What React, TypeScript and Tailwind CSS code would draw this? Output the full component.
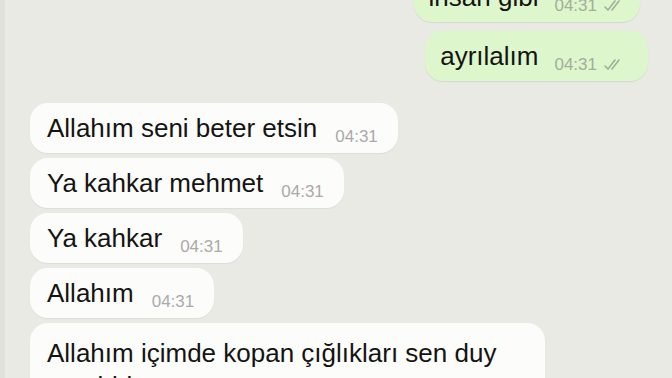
import React from "react";

type Msg = { text: string; time: string; out?: boolean };

const incoming: Msg[] = [
  { text: "Allahım seni beter etsin", time: "04:31" },
  { text: "Ya kahkar mehmet", time: "04:31" },
  { text: "Ya kahkar", time: "04:31" },
  { text: "Allahım", time: "04:31" },
];

const Ticks = () => (
  <svg width="22" height="12" viewBox="0 0 22 12" className="ml-[6px]">
    <path d="M2 8 L5 11 L12 2" fill="none" stroke="#9fb09a" strokeWidth="1.6" strokeLinecap="round" />
    <path d="M9 11 L16 2" fill="none" stroke="#9fb09a" strokeWidth="1.6" strokeLinecap="round" />
  </svg>
);

const OutBubble = ({ text, last }: { text: string; last?: boolean }) => (
  <div
    className={`flex h-[50px] items-center rounded-[18px] bg-[#def6cb] pl-[15px] shadow-[0_1px_1px_rgba(0,0,0,0.08)] ${
      last ? "pr-[23px]" : "pr-[15px]"
    }`}
  >
    <span className="text-[26px] leading-none text-[#141414]">{text}</span>
    <span className="ml-[16px] mt-[16px] flex items-center text-[17px] leading-none text-[#a3ae9d]">
      04:31
      <Ticks />
    </span>
  </div>
);

const InBubble = ({ text, time }: Msg) => (
  <div className="flex h-[50px] items-center self-start rounded-[18px] bg-[#fcfcfa] pl-[17px] pr-[20px] shadow-[0_1px_1px_rgba(0,0,0,0.06)]">
    <span className="text-[26px] leading-none text-[#141414]">{text}</span>
    <span className="ml-[18px] mt-[16px] text-[17px] leading-none text-[#aaaaaa]">{time}</span>
  </div>
);

export default function App() {
  return (
    <div
      className="h-[378px] w-[672px] overflow-hidden border-l-[5px] border-[#e1e1dc] bg-[#eaeae5]"
      style={{ fontFamily: '"Liberation Sans", Arial, sans-serif' }}
    >
      <div className="-mt-[28px] flex flex-col">
        <div className="flex flex-col items-end gap-[9px] pr-[24px]">
          <div className="mr-[8px]">
            <OutBubble text="insan gibi" />
          </div>
          <OutBubble text="ayrılalım" last />
        </div>

        <div className="mt-[22px] flex flex-col gap-[5px] pl-[25px]">
          {incoming.map((m, i) => (
            <InBubble key={i} {...m} />
          ))}
          <div className="w-[515px] rounded-[18px] bg-[#fcfcfa] pl-[17px] pr-[20px] pt-[14px] pb-[10px] text-[26px] leading-[33px] text-[#141414] shadow-[0_1px_1px_rgba(0,0,0,0.06)]">
            Allahım içimde kopan çığlıkları sen duy yarabbim
          </div>
        </div>
      </div>
    </div>
  );
}
